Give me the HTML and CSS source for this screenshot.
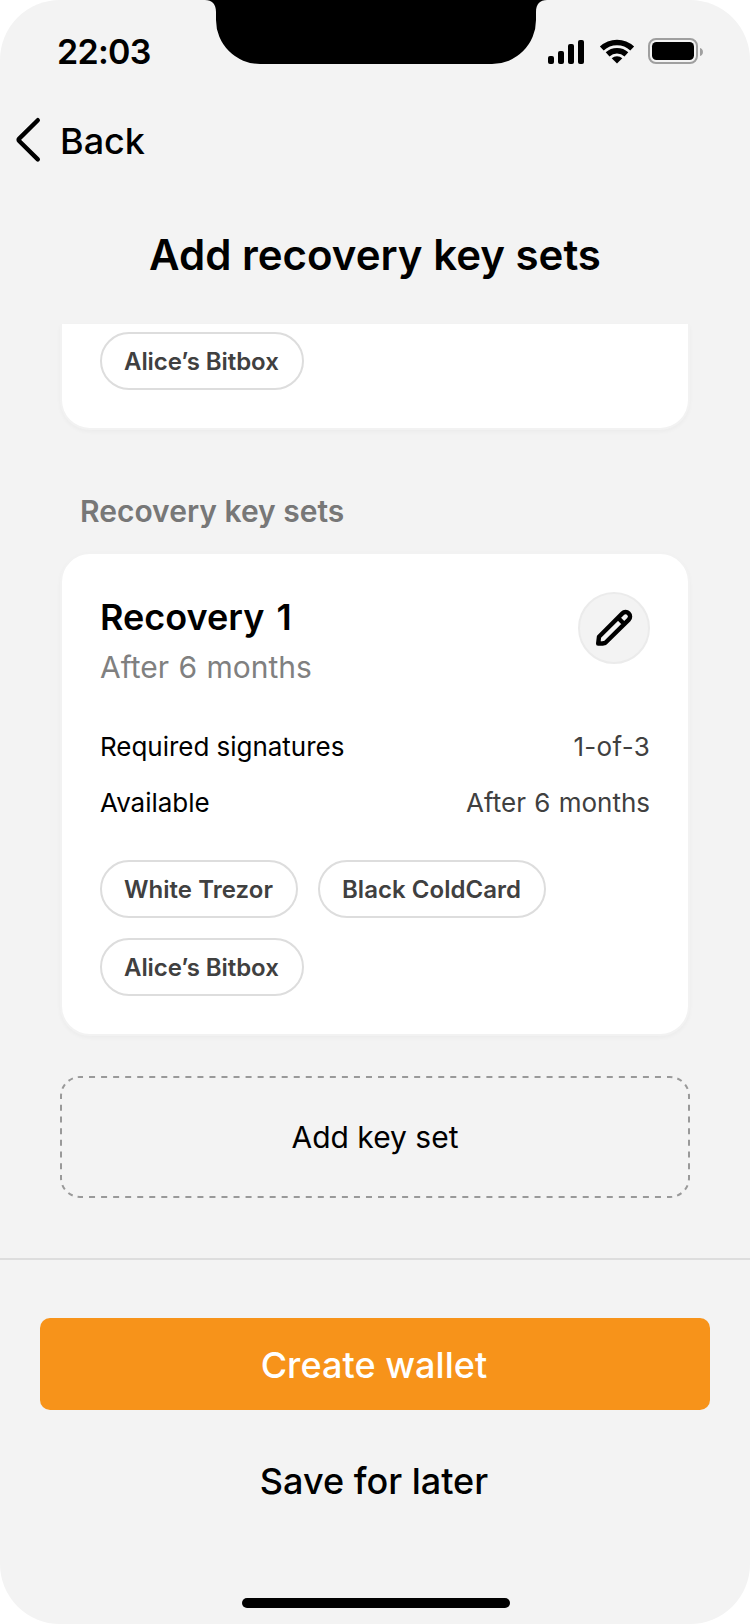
FILE: index.html
```html
<!DOCTYPE html>
<html lang="en">
<head>
<meta charset="utf-8">
<title>Add recovery key sets</title>
<link rel="stylesheet" href="styles.css">
</head>
<body>
<div class="phone">
  <header class="status-bar">
    <span class="time">22:03</span>
    <svg class="notch" width="342" height="64" viewBox="0 0 342 64"><path d="M0 0H342C335 0 331 4 331 12V20A44 44 0 0 1 287 64H55A44 44 0 0 1 11 20V12C11 4 7 0 0 0Z"/></svg>
    <svg class="status-icons" width="156" height="28" viewBox="548 37 156 28">
      <rect x="548" y="56" width="6" height="8" rx="2"/>
      <rect x="558" y="51" width="6" height="13" rx="2"/>
      <rect x="568" y="44" width="6" height="20" rx="2"/>
      <rect x="578" y="40" width="6" height="24" rx="2"/>
      <path class="wifi" d="M601.8 48.6A22 22 0 0 1 632.2 48.6M607.6 54.4A14 14 0 0 1 626.4 54.4"/>
      <path d="M617 63.5L611.7 58.3A7.6 7.6 0 0 1 622.3 58.3Z"/>
      <rect class="battery" x="649" y="39" width="48" height="24" rx="7"/>
      <rect x="652" y="42" width="42" height="18" rx="4.5"/>
      <path class="battery-tip" d="M700 48A4.2 4.2 0 0 1 700 56Z"/>
    </svg>
  </header>

  <nav class="nav">
    <svg class="chevron" width="24" height="44" viewBox="0 0 24 44"><path d="M20.8 2.2L2.2 20.6Q1 21.8 2.2 23L20.8 41.4"/></svg>
    <span class="nav-label">Back</span>
  </nav>

  <h1 class="title">Add recovery key sets</h1>

  <main class="content">
    <section class="card card-clipped">
      <div class="chips"><span class="chip chip-tight">Alice’s Bitbox</span></div>
    </section>

    <h2 class="section-title">Recovery key sets</h2>

    <section class="card card-recovery">
      <div class="card-head">
        <div>
          <h3 class="card-title">Recovery 1</h3>
          <p class="card-sub">After 6 months</p>
        </div>
        <button class="edit" aria-label="Edit">
          <svg width="40" height="40" viewBox="0 0 40 40"><path d="M4.2 35.6L5 28.8L28.4 5.4A4.4 4.4 0 0 1 34.8 11.6L11.4 34.8Q8 35.8 4.2 35.6Z M24 9.8L30.2 16"/></svg>
        </button>
      </div>
      <dl class="facts">
        <div class="fact"><dt>Required signatures</dt><dd class="quorum">1-of-3</dd></div>
        <div class="fact"><dt>Available</dt><dd>After 6 months</dd></div>
      </dl>
      <div class="chips">
        <span class="chip">White Trezor</span>
        <span class="chip">Black ColdCard</span>
        <span class="chip chip-tight">Alice’s Bitbox</span>
      </div>
    </section>

    <button class="add">
      <svg class="dashes" width="630" height="122" viewBox="0 0 630 122">
        <path class="dash-h" d="M20 1H610M20 121H610"/>
        <path class="dash-v" d="M1 20V102M629 20V102"/>
        <path class="dash-c" d="M1 20A19 19 0 0 1 20 1M610 1A19 19 0 0 1 629 20M629 102A19 19 0 0 1 610 121M20 121A19 19 0 0 1 1 102"/>
      </svg>
      <span>Add key set</span>
    </button>
  </main>

  <footer class="footer">
    <button class="primary">Create wallet</button>
    <button class="secondary">Save for later</button>
    <div class="home"></div>
  </footer>
</div>
</body>
</html>
```
FILE: styles.css
```css
* { box-sizing: border-box; }
body { margin: 0; background: #fff; font-family: Inter, "Liberation Sans", sans-serif; color: #000; }
h1, h2, h3, p, dl, dd { margin: 0; }
button { font-family: inherit; border: 0; padding: 0; background: none; color: inherit; }
svg { display: block; }

.phone { width: 750px; height: 1624px; background: #f3f3f3; border-radius: 60px; overflow: hidden; display: flex; flex-direction: column; }

.status-bar { height: 92px; display: flex; align-items: flex-start; padding-left: 57px; }
.time { width: 148px; padding-top: 30px; font-size: 34px; line-height: 44px; font-weight: 600; letter-spacing: -.7px; }
.status-icons { margin: 37px 0 0 1px; }
.wifi { fill: none; stroke: #000; stroke-width: 5.6; }
.battery { fill: none; stroke: #9f9f9f; stroke-width: 2; }
.battery-tip { fill: #9f9f9f; }

.nav { height: 96px; display: flex; align-items: center; gap: 19px; padding-left: 17px; font-size: 36px; line-height: 44px; font-weight: 500; }
.nav-label { padding-top: 2px; }
.chevron { overflow: visible; }
.chevron path { fill: none; stroke: #000; stroke-width: 4.4; stroke-linecap: round; }

.title { height: 136px; padding-top: 42px; font-size: 42px; line-height: 50px; font-weight: 600; text-align: center; }

.content { height: 934px; padding: 0 60px; }
.card { background: #fff; border: 2px solid #f2f2f2; border-radius: 30px; padding: 38px; box-shadow: 0 2px 4px rgba(0, 0, 0, .03); }
.card-clipped { border-top: 0; border-radius: 0 0 30px 30px; padding-top: 8px; height: 106px; }
.chips { display: flex; flex-wrap: wrap; gap: 20px; }
.chip { height: 58px; padding: 0 23px 0 22px; border: 2px solid #ddd; border-radius: 29px; font-size: 24px; line-height: 56px; font-weight: 600; letter-spacing: .04px; color: #404040; white-space: nowrap; }
.chip-tight { letter-spacing: -.06px; }

.section-title { margin: 63px 0 23px 20px; font-size: 30px; line-height: 36px; font-weight: 600; color: #777; }

.card-recovery { height: 484px; }
.card-head { display: flex; justify-content: space-between; }
.card-title { padding-top: 3px; font-size: 36px; line-height: 44px; font-weight: 600; word-spacing: 3px; }
.card-sub { margin-top: 10px; font-size: 30px; line-height: 36px; color: #808080; word-spacing: 1px; }
.edit { width: 72px; height: 72px; border: 2px solid #ebebeb; border-radius: 50%; background: #f3f3f3; display: grid; place-items: center; }
.edit path { fill: none; stroke: #000; stroke-width: 4.4; stroke-linejoin: round; }
.facts { margin-top: 44px; display: grid; gap: 20px; font-size: 26px; line-height: 36px; }
.fact { display: flex; justify-content: space-between; }
.fact dt { letter-spacing: -.03px; }
.fact dd { color: #404040; word-spacing: 1px; }
.fact .quorum { letter-spacing: .3px; }
.card-recovery .chips { margin-top: 39px; }

.add { position: relative; display: grid; place-items: center; width: 630px; height: 122px; margin-top: 40px; font-size: 30px; line-height: 36px; }
.dashes { position: absolute; inset: 0; fill: none; stroke: #999; stroke-width: 2; }
.dash-h { stroke-dasharray: 6 6.041; stroke-dashoffset: 3; }
.dash-v { stroke-dasharray: 6 5.714; stroke-dashoffset: 3; }
.dash-c { stroke-dasharray: 5 4.948; stroke-dashoffset: 2.5; }

.footer { flex: 1; border-top: 2px solid #ddd; padding: 58px 40px 0; display: flex; flex-direction: column; align-items: center; }
.primary, .secondary { width: 670px; height: 92px; border-radius: 10px; font-size: 36px; line-height: 44px; font-weight: 500; padding: 2px 2px 0 0; }
.primary { background: #f7931a; color: #fff; letter-spacing: .05px; }
.secondary { margin-top: 24px; }
.home { width: 268px; height: 10px; margin: 72px 0 0 2px; border-radius: 5px; background: #000; }
```
